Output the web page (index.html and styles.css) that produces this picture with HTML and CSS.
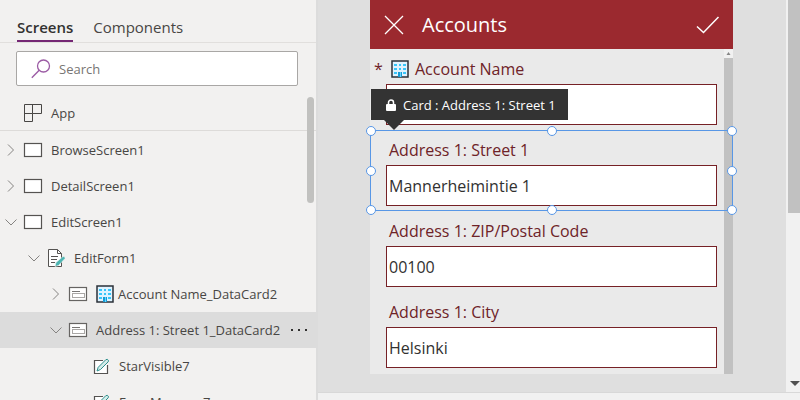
FILE: index.html
```html
<!DOCTYPE html>
<html lang="en">
<head>
<meta charset="utf-8">
<title>Accounts app editor</title>
<link rel="stylesheet" href="styles.css">
</head>
<body>
<svg class="symbols" aria-hidden="true">
  <symbol id="right" viewBox="0 0 12 12"><path d="M3 .5 8.500 6 3 11.500" fill="none" stroke="#858381"/></symbol>
  <symbol id="down" viewBox="0 0 12 12"><path d="M.5 3.500 6 9l5.500-5.500" fill="none" stroke="#858381"/></symbol>
  <symbol id="screen" viewBox="0 0 20 20"><rect x="1.500" y="3.500" width="17" height="13" fill="#fff" stroke="#555351" stroke-width="1.200"/></symbol>
  <symbol id="card" viewBox="0 0 20 20"><rect x="1.500" y="3.500" width="17" height="13" fill="#fff" stroke="#666462" stroke-width="1.200"/><path d="M4 7.500h8" stroke="#777573"/><rect x="4.500" y="9.500" width="12" height="4" fill="none" stroke="#aaa8a6"/></symbol>
  <symbol id="edit" viewBox="0 0 20 20"><path d="M12 4.500H3.500v13h13V9" fill="#fff" stroke="#555351" stroke-width="1.200"/><path d="M6 15l1.200-3.700 7.600-7.600q1.700-1 2.500.5.500 1-.3 1.800L9.500 13.500z" fill="#d4ecea" stroke="#2e8f8c"/></symbol>
  <symbol id="building" viewBox="0 0 18 18"><path d="M1 1h16v16H1z" fill="#dff3ff" stroke="#2b3138" stroke-width="1.500"/><path d="M3 4h3v2H3zm5 0h2v2H8zm4 0h3v2h-3zM3 8h3v2H3zm5 0h2v2H8zm4 0h3v2h-3zM3 12h3v2H3zm9 0h3v2h-3z" fill="#38c6fa"/><path d="M7 12h4v5H7z" fill="#169bd5"/><path d="M9 12h1v5H9z" fill="#64d5ff"/></symbol>
</svg>
<div class="workspace">
  <aside class="sidebar">
    <nav class="tabs">
      <button class="tab active">Screens</button>
      <button class="tab">Components</button>
    </nav>
    <div class="search">
      <svg viewBox="0 0 20 20" aria-hidden="true"><circle cx="12.500" cy="7" r="6" fill="none" stroke="#9b5ba4" stroke-width="1.300"/><path d="M8.200 11.300.8 18.700" stroke="#9b5ba4" stroke-width="1.400"/></svg>
      <input type="search" placeholder="Search" aria-label="Search">
    </div>
    <div class="row app">
      <svg class="icon" viewBox="0 0 20 20" aria-hidden="true"><path d="M1.500 1.500h17v9h-9v8h-8zM9.500 1.500v9h-8" fill="none" stroke="#484644"/></svg>
      <span>App</span>
    </div>
    <ul class="tree">
      <li class="row"><button class="toggle" aria-label="Expand BrowseScreen1"><svg><use href="#right"/></svg></button><svg class="icon"><use href="#screen"/></svg><span>BrowseScreen1</span></li>
      <li class="row"><button class="toggle" aria-label="Expand DetailScreen1"><svg><use href="#right"/></svg></button><svg class="icon"><use href="#screen"/></svg><span>DetailScreen1</span></li>
      <li class="row"><button class="toggle" aria-label="Collapse EditScreen1"><svg><use href="#down"/></svg></button><svg class="icon"><use href="#screen"/></svg><span>EditScreen1</span></li>
      <li class="row level-1"><button class="toggle" aria-label="Collapse EditForm1"><svg><use href="#down"/></svg></button><svg class="icon" viewBox="0 0 20 20"><path d="M11.500 1.500h-9v17h13V5.500z" fill="#fff" stroke="#555351"/><path d="M11.500 1.500v4h4M5 8.500h7M5 11.500h6M5 14.500h4" fill="none" stroke="#555351"/><path d="m9 18.500 1-4 7-6q2.500-.5 2 2L12.500 17.500z" fill="#4db5b2" stroke="#f2f1f0" stroke-width=".6"/></svg><span>EditForm1</span></li>
      <li class="row level-2"><button class="toggle" aria-label="Expand Account Name_DataCard2"><svg><use href="#right"/></svg></button><svg class="icon"><use href="#card"/></svg><svg class="emoji"><use href="#building"/></svg><span class="after-emoji">Account Name_DataCard2</span></li>
      <li class="row level-2 selected"><button class="toggle" aria-label="Collapse Address 1: Street 1_DataCard2"><svg><use href="#down"/></svg></button><svg class="icon"><use href="#card"/></svg><span>Address 1: Street 1_DataCard2</span><button class="more" aria-label="More actions"><svg viewBox="0 0 18 4"><path d="M1 1h2v2H1zm7 0h2v2H8zm7 0h2v2h-2z" fill="#323130"/></svg></button></li>
      <li class="row level-3"><svg class="icon"><use href="#edit"/></svg><span>StarVisible7</span></li>
      <li class="row level-3"><svg class="icon"><use href="#edit"/></svg><span>ErrorMessage7</span></li>
    </ul>
    <div class="thumb"></div>
  </aside>
  <main class="stage">
    <section class="phone">
      <header class="title-bar">
        <button aria-label="Cancel"><svg viewBox="0 0 24 24"><path d="m3 3 18 18M21 3 3 21" fill="none" stroke="#fff" stroke-width="1.300"/></svg></button>
        <h1>Accounts</h1>
        <button aria-label="Save"><svg viewBox="0 0 24 24"><path d="m1 13.500 6.500 6L22.500 4" fill="none" stroke="#fff" stroke-width="1.500"/></svg></button>
      </header>
      <div class="form-area">
        <form class="form">
          <div class="field required"><label for="name"><span class="star">*</span><svg class="emoji"><use href="#building"/></svg>Account Name</label><input id="name" type="text"></div>
          <div class="field"><label for="street">Address 1: Street 1</label><input id="street" type="text" value="Mannerheimintie 1">
            <div class="selection"><i></i><i></i><i></i><i></i><i></i><i></i><i></i><i></i></div>
            <div class="tooltip" role="tooltip"><svg viewBox="0 0 10 12"><path d="M2.500 5V3.500a2.500 2.500 0 0 1 5 0V5" fill="none" stroke="#fff" stroke-width="1.500"/><rect y="5" width="10" height="7" rx="1" fill="#fff"/></svg>Card : Address 1: Street 1</div>
          </div>
          <div class="field"><label for="zip">Address 1: ZIP/Postal Code</label><input id="zip" type="text" value="00100"></div>
          <div class="field"><label for="city">Address 1: City</label><input id="city" type="text" value="Helsinki"></div>
        </form>
        <div class="form-scroll"><svg viewBox="0 0 8 9"><path d="M2 6 4 3l2 3z" fill="#858585"/></svg></div>
      </div>
    </section>
  </main>
  <div class="page-scroll"><div class="page-thumb"></div><svg viewBox="0 0 10 6"><path d="M0 0h10L5 5z" fill="#505050"/></svg></div>
</div>
<footer class="status"></footer>
</body>
</html>
```
FILE: styles.css
```css
* { box-sizing: border-box; }
body {
  margin: 0;
  height: 100vh;
  display: flex;
  flex-direction: column;
  overflow: hidden;
  background: #f2f1f0;
  color: #484644;
  font: 13px/20px "Open Sans", sans-serif;
}
button { border: 0; padding: 0; background: none; color: inherit; font: inherit; }
svg { display: block; flex: none; }
.symbols { position: absolute; width: 0; height: 0; }
.workspace { flex: 1; min-height: 0; display: flex; }

.sidebar {
  position: relative;
  flex: none;
  width: 318px;
  height: 100vh;
  overflow: hidden;
  background: #f2f1f0;
  border-right: 2px solid #dcdcdc;
}
.tabs {
  display: flex;
  gap: 20px;
  padding: 16px 17px 0;
  border-bottom: 1px solid #e1dfdd;
}
.tab { height: 26px; font-size: 15px; line-height: 22px; padding: 0 0 4px; }
.tab.active { font-weight: 600; color: #323130; border-bottom: 2px solid #742774; padding-bottom: 2px; }
.search {
  display: flex;
  align-items: center;
  gap: 8px;
  height: 35px;
  margin: 8px 18px 9px 16px;
  padding: 0 14px;
  background: #fff;
  border: 1px solid #a9a7a5;
  border-radius: 2px;
}
.search svg { width: 20px; height: 20px; }
.search input {
  flex: 1;
  min-width: 0;
  padding: 0;
  border: 0;
  outline: 0;
  background: none;
  font: inherit;
}
.search input::placeholder { color: #777573; }
.row { display: flex; align-items: center; height: 36px; padding-left: 5px; white-space: nowrap; }
.row.app { padding-left: 23px; border-bottom: 1px solid #dddbd9; }
.tree { list-style: none; margin: 0; padding: 1px 0 0; }
.icon { width: 20px; height: 20px; margin-right: 8px; }
.toggle { margin-right: 6px; }
.toggle svg { width: 12px; height: 12px; }
.level-1 { padding-left: 28px; }
.level-2 { padding-left: 50px; }
.level-3 { padding-left: 91px; }
.emoji { width: 18px; height: 18px; }
.after-emoji { margin-left: 4px; }
.selected { background: #dcdcdc; }
.more { margin: 0 8px 0 auto; }
.more svg { width: 18px; height: 4px; }
.thumb {
  position: absolute;
  top: 97px;
  right: 2px;
  width: 7px;
  height: 106px;
  border-radius: 4px;
  background: #c1c1bf;
}

.stage { flex: 1; min-width: 0; display: flex; justify-content: center; padding: 0 53px 18px 52px; background: #dfdfdf; }
.phone { flex: 1; min-width: 0; display: flex; flex-direction: column; background: #eaeaea; }
.title-bar {
  flex: none;
  display: flex;
  align-items: center;
  height: 49px;
  padding: 0 13px 0 12px;
  background: #9b292f;
  color: #fff;
}
.title-bar h1 { flex: 1; margin: 0 0 0 16px; font-size: 20px; line-height: 28px; font-weight: 400; }
.title-bar svg { width: 24px; height: 24px; }
.form-area { flex: 1; min-height: 0; display: flex; }
.form { flex: 1; min-width: 0; display: flex; flex-direction: column; gap: 1px; }
.field { position: relative; flex: none; height: 80px; padding: 9px 7px 0 16px; color: #6e2328; font-size: 16px; line-height: 22px; }
.field label { display: flex; align-items: center; height: 22px; margin: 0 0 4px 3px; }
.field input {
  display: block;
  width: 100%;
  height: 41px;
  padding: 0 2px;
  border: 1px solid #762126;
  border-radius: 0;
  background: #fff;
  color: #323130;
  font: inherit;
}
.field.required label { margin-left: -12px; }
.star { width: 17px; }
.required .emoji { margin-right: 6px; }
.selection { position: absolute; top: 0; right: -9px; bottom: -1px; left: 0; border: 1px solid #5897e6; pointer-events: none; }
.selection i {
  position: absolute;
  width: 10px;
  height: 10px;
  border: 1px solid #5897e6;
  border-radius: 50%;
  background: #fff;
  transform: translate(-50%, -50%);
}
.selection i:nth-child(-n+3) { top: 0; }
.selection i:nth-child(n+6) { top: 100%; }
.selection i:nth-child(4), .selection i:nth-child(5) { top: 50%; }
.selection i:nth-child(1), .selection i:nth-child(4), .selection i:nth-child(6) { left: 0; }
.selection i:nth-child(2), .selection i:nth-child(7) { left: 50%; }
.selection i:nth-child(3), .selection i:nth-child(5), .selection i:nth-child(8) { left: 100%; }
.tooltip {
  position: absolute;
  bottom: 90px;
  left: 1px;
  display: flex;
  align-items: center;
  gap: 7px;
  height: 31px;
  padding: 0 12px 0 15px;
  background: #333;
  color: #fff;
  font-size: 13px;
  white-space: nowrap;
}
.tooltip svg { width: 10px; height: 12px; }
.tooltip::after {
  content: "";
  position: absolute;
  top: 100%;
  left: 13px;
  border: 10px solid transparent;
  border-top-color: #333;
  border-bottom: 0;
}
.form-scroll { flex: none; width: 9px; background: #c1c1c1; }
.form-scroll svg { width: 9px; height: 9px; background: #f1f1f1; }

.page-scroll {
  flex: none;
  width: 14px;
  display: flex;
  flex-direction: column;
  justify-content: space-between;
  align-items: flex-end;
  padding-bottom: 5px;
  background: #f1f1f1;
}
.page-thumb { width: 12px; height: 55%; background: #c1c1c1; }
.page-scroll svg { width: 10px; height: 6px; }
.status { flex: none; height: 8px; margin-left: 318px; background: #f1f1f1; border-top: 1px solid #d8d8d8; }
```
